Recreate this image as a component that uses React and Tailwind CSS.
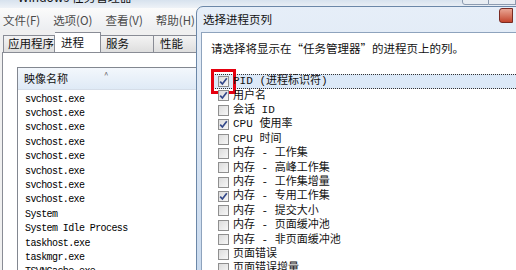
import React from "react";

const PROCS = [
  "svchost.exe",
  "svchost.exe",
  "svchost.exe",
  "svchost.exe",
  "svchost.exe",
  "svchost.exe",
  "svchost.exe",
  "svchost.exe",
  "System",
  "System Idle Process",
  "taskhost.exe",
  "taskmgr.exe",
  "TSVNCache.exe",
];

const COLUMNS = [
  { label: "PID (进程标识符)", checked: true, focus: true },
  { label: "用户名", checked: true },
  { label: "会话 ID" },
  { label: "CPU 使用率", checked: true },
  { label: "CPU 时间" },
  { label: "内存 - 工作集" },
  { label: "内存 - 高峰工作集" },
  { label: "内存 - 工作集增量" },
  { label: "内存 - 专用工作集", checked: true },
  { label: "内存 - 提交大小" },
  { label: "内存 - 页面缓冲池" },
  { label: "内存 - 非页面缓冲池" },
  { label: "页面错误" },
  { label: "页面错误增量" },
];

const cjk = { fontFamily: '"Noto Sans CJK SC", sans-serif' };
const mono = { fontFamily: '"Liberation Mono", "Noto Sans CJK SC", monospace' };

function Checkbox({ checked, marked }) {
  return (
    <span
      className={
        "flex h-[11px] w-[11px] shrink-0 items-center justify-center border border-[#8f8f8f] bg-gradient-to-br from-[#dcdcdc] to-[#f7f7f7] " +
        (marked ? "outline-[3px] outline-solid outline-[#e5000f] outline-offset-[4px]" : "")
      }
    >
      {checked ? (
        <svg width="9" height="9" viewBox="0 0 9 9">
          <path d="M1.2 4.6 L3.4 7 L7.8 1.3" fill="none" stroke="#34498a" strokeWidth="1.7" />
        </svg>
      ) : null}
    </span>
  );
}

function TaskManager() {
  return (
    <div className="flex h-[270px] w-[516px] flex-col bg-[#f0f0f0]">
      <div className="h-[8px] shrink-0 overflow-hidden bg-gradient-to-b from-[#d7e2ee] to-[#eef2f7]">
        <div className="-mt-[12px] pl-[18px] text-[12px] text-[#111]" style={cjk}>
          Windows 任务管理器
        </div>
      </div>
      <div
        className="flex h-[22px] shrink-0 items-center gap-[13px] bg-gradient-to-b from-[#fbfbfb] to-[#eceef1] pl-[3px] pt-[3px] text-[11.5px] text-[#4a4a4a]"
        style={cjk}
      >
        <span>文件(F)</span>
        <span>选项(O)</span>
        <span>查看(V)</span>
        <span>帮助(H)</span>
      </div>
      <div className="flex h-[22px] shrink-0 items-end pl-[3px] text-[11.5px] text-[#111]" style={cjk}>
        <div className="flex h-[17px] w-[52px] items-center border border-b-0 border-[#898c95] bg-gradient-to-b from-[#f4f4f4] to-[#dedede] pl-[4px]">
          应用程序
        </div>
        <div className="flex h-[20px] w-[46px] items-center border border-b-0 border-l-0 border-[#898c95] bg-white pl-[6px]">
          进程
        </div>
        <div className="flex h-[17px] w-[53px] items-center border border-b-0 border-l-0 border-[#898c95] bg-gradient-to-b from-[#f4f4f4] to-[#dedede] pl-[5px]">
          服务
        </div>
        <div className="flex h-[17px] w-[45px] items-center border border-b-0 border-l-0 border-[#898c95] bg-gradient-to-b from-[#f4f4f4] to-[#dedede] pl-[6px]">
          性能
        </div>
      </div>
      <div className="ml-[2px] min-h-0 flex-1 overflow-hidden border-l border-t border-[#898c95] bg-white pl-[14px] pt-[14px]">
        <div className="h-[300px] w-[180px] border-l border-t border-[#828790]">
          <div
            className="relative flex h-[22px] items-center border-b border-[#d5dde8] bg-gradient-to-b from-[#f3f7fc] to-[#dfeaf6] pl-[6px] text-[11px] text-[#111]"
            style={cjk}
          >
            映像名称
            <span className="absolute left-[86px] top-[1px] text-[8px] text-[#666]">^</span>
          </div>
          <div className="pt-[2px]">
            {PROCS.map((p, i) => (
              <div
                key={i}
                className="flex h-[14.4px] items-center pl-[7px] text-[10px] tracking-[-0.6px] text-black"
                style={mono}
              >
                {p}
              </div>
            ))}
          </div>
        </div>
      </div>
    </div>
  );
}

function ColumnsDialog() {
  return (
    <div className="absolute left-[196px] top-[6px] flex h-[280px] w-[330px] flex-col rounded-tl-[7px] border border-[#6b87a8] bg-gradient-to-b from-[#e6eef8] to-[#c9daee] pl-[4px]">
      <div className="flex h-[25px] shrink-0 items-center justify-between">
        <span className="pl-[2px] text-[11.5px] text-[#111]" style={cjk}>
          选择进程页列
        </span>
        <span className="mr-[12px] mt-[1px] h-[15px] w-[14px] self-start rounded-l-[3px] border border-[#7a2a22] bg-gradient-to-b from-[#e8a493] to-[#c2432c]" />
      </div>
      <div className="min-h-0 flex-1 overflow-hidden border border-[#8ea3bd] bg-white">
        <div className="pl-[9px] pt-[7px] text-[11.5px] text-[#111]" style={cjk}>
          请选择将显示在“任务管理器”的进程页上的列。
        </div>
        <div className="pt-[17px]">
          {COLUMNS.map((c, i) => (
            <div
              key={i}
              className={
                "ml-[11px] flex h-[14.4px] items-center gap-[4px] pl-[4px] text-[11px] text-[#111] " +
                (c.focus ? "border border-dotted border-[#333] bg-[#dce9f8]" : "border border-transparent")
              }
              style={mono}
            >
              <Checkbox checked={c.checked} marked={c.focus} />
              <span>{c.label}</span>
            </div>
          ))}
        </div>
      </div>
    </div>
  );
}

export default function App() {
  return (
    <div className="relative h-[270px] w-[516px] overflow-hidden bg-white">
      <TaskManager />
      <div className="absolute left-[462px] top-[-8px] flex">
        <span className="h-[13px] w-[27px] rounded-bl-[3px] border border-[#8c9bb0] bg-[#e8edf3]" />
        <span className="h-[13px] w-[27px] border border-l-0 border-[#8c9bb0] bg-[#e8edf3]" />
      </div>
      <ColumnsDialog />
    </div>
  );
}
